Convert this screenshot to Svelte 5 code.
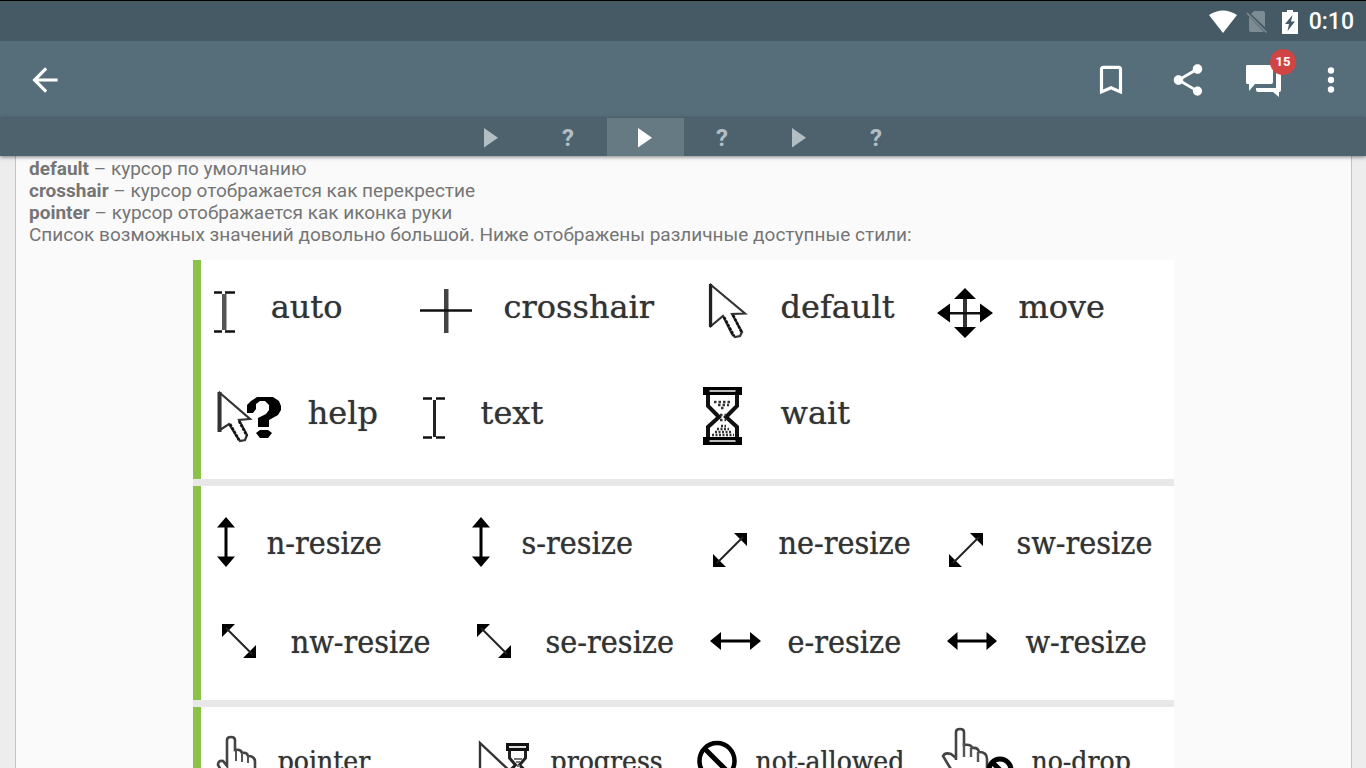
<script>
  const tabs = ['video', 'quiz', 'video', 'quiz', 'video', 'quiz'];
  let active = $state(2);

  const terms = [
    ['default', 'курсор по умолчанию'],
    ['crosshair', 'курсор отображается как перекрестие'],
    ['pointer', 'курсор отображается как иконка руки']
  ];

  const sections = [
    {
      kind: 'basic',
      items: [
        ['auto', 38], ['crosshair', 63], ['default', 56], ['move', 60],
        ['help', 75], ['text', 40], ['wait', 56]
      ]
    },
    {
      kind: 'resize',
      items: [
        ['n-resize', 34], ['s-resize', 34], ['ne-resize', 52], ['sw-resize', 52],
        ['nw-resize', 58], ['se-resize', 58], ['e-resize', 61], ['w-resize', 61]
      ]
    },
    {
      kind: 'state',
      items: [['pointer', 53], ['progress', 64], ['not-allowed', 49], ['no-drop', 79]]
    }
  ];
</script>

{#snippet cursor(name, width)}
  <svg class="cursor" {width} height="64" viewBox="0 -32 {width} 64" aria-hidden="true">
    {#if name === 'auto'}
      <path d="M13-17h4.500v36H13z" fill="#555" />
      <path d="M5-18.500h8M16-18.500h10M5 20.500h8M16 20.500h10" stroke="#111" stroke-width="2.600" />
    {:else if name === 'text'}
      <path d="M16-17h3v37h-3z" fill="#222" />
      <path d="M6-18.500h9M19-18.500h9M6 20.500h9M19 20.500h9" stroke="#111" stroke-width="2.600" />
    {:else if name === 'crosshair'}
      <path d="M27-22h4.500v44H27z" fill="#444" />
      <path d="M3-.500h52" stroke="#111" stroke-width="2.400" />
    {:else if name === 'default'}
      <path d="M11-26 45 2.500 32 3 42 21 40 25 35 26 32 23 23 5 11 15Z" fill="#fff" stroke="#333" stroke-width="2.200" />
      <path d="M10.500-27v43" stroke="#222" stroke-width="3.200" />
      <path d="M24 6l10 19M33 4l9 18" stroke="#111" stroke-width="2.600" stroke-dasharray="3 1" />
    {:else if name === 'help'}
      <path d="M11-24 41 2 30 3 38 18 36 23 31 24 28 20 20 7 11 13Z" fill="#fff" stroke="#333" stroke-width="2.200" />
      <path d="M10.500-25v40" stroke="#333" stroke-width="4" />
      <path d="M21 7l9 16M30 4l8 15" stroke="#111" stroke-width="2.600" stroke-dasharray="3 1" />
      <path d="M38-4v-8l4-4 6-4h16l6 4 2 5v4l-3 5-9 5v7H49V1l8-4 3-4v-5l-4-4h-5l-4 3v5l-3 4h-6z" />
      <path d="M47 16l4-3h8l4 3-4 5h-8z" />
    {:else if name === 'wait'}
      <path d="M4.500-28.500h36v5h-36zM4.500 21.500h36v5h-36z" fill="#bbb" stroke="#000" stroke-width="3" />
      <path d="M7-29v6M38-29v6M7 21v6M38 21v6" stroke="#000" stroke-width="5" />
      <path d="M8-22v11L19 0 8 10v10M37-22v11L26 0l11 10v10" fill="none" stroke="#111" stroke-width="4" />
      <path d="M14-15h17M18-12h11M21-9h4M20-2h6M20 3h6" stroke="#333" stroke-width="2.500" stroke-dasharray="2.500 2" />
      <path d="M21 9h5M17 12h12M15 15h16M12 18h22" stroke="#333" stroke-width="2.500" stroke-dasharray="2 1.500" />
    {:else if name === 'move'}
      <path d="M29-14h4v32h-4z" fill="#333" />
      <path d="M13 1h36v2.500H13z" fill="#111" />
      <path d="M31-23l11 11H20zM31 27l11-11H20zM3 2l13-9.500v19zM59 2 46-7.500v19z" />
    {:else if name === 'n-resize' || name === 's-resize'}
      <path d="M17-26l9 10.500H18.500v29H26L17 24 8 13.500h7.500v-29H8z" />
    {:else if name === 'ne-resize'}
      <path d="M32-10h13V3zM11 11v13h13z" /><path d="M15 20 41-6" stroke="#222" stroke-width="2" />
    {:else if name === 'sw-resize'}
      <path d="M30-10h13V3zM9 11v13h13z" /><path d="M13 20 39-6" stroke="#222" stroke-width="2" />
    {:else if name === 'nw-resize' || name === 'se-resize'}
      <path d="M13-18h13L13-5zM47 3v13H34z" /><path d="M17-14 43 12" stroke="#222" stroke-width="2" />
    {:else if name === 'e-resize'}
      <path d="M8-1l11-9v7.500h29V-10l11 9-11 9V.500H19V8z" />
    {:else if name === 'w-resize'}
      <path d="M7-1l10.500-9v7.500h29V-10L57-1 46.500 8V.500h-29V8z" />
    {:else if name === 'pointer'}
      <path d="M18 6v-26q0-3 4-3t4 3v10q6-1 7 3 5-1 6 3 7 0 7 6v14l-4 8H22L12 10 9 5q0-5 5-4z" fill="#fff" stroke="#444" stroke-width="2.600" />
      <path d="M27-10V1M33-7v9M39-4v7" fill="none" stroke="#555" stroke-width="2" />
    {:else if name === 'progress'}
      <path d="M9-17v44l12-11 8 14 6-3-7-13h14z" fill="#fff" stroke="#333" stroke-width="2.400" />
      <path d="M36.500-15.500h20v5h-20zM36.500 19h20v5h-20z" fill="#ddd" stroke="#111" stroke-width="3" />
      <path d="M38.500-9v7l6 7-6 6v7M54.500-9v7l-6 7 6 6v7" fill="none" stroke="#222" stroke-width="3" />
      <path d="M43-1h8M45 2h4M46 6h3" stroke="#777" stroke-width="2" />
    {:else if name === 'not-allowed'}
      <ellipse cx="26" cy="1" rx="17.500" ry="18" fill="#fff" stroke="#000" stroke-width="4.500" />
      <path d="M14-11 38 13" stroke="#000" stroke-width="5" />
    {:else if name === 'no-drop'}
      <path d="M20 0v-28q0-3 4-3t4 3v13q7-1 8 3 6-1 7 4 8 0 8 7v16l-5 8H24L13 6 7-4q2-4 8-2l5 4z" fill="#fff" stroke="#444" stroke-width="2.600" />
      <path d="M28-17v14M35-12v9M42-8v10" fill="none" stroke="#555" stroke-width="2.400" />
      <circle cx="64" cy="10" r="11" fill="#fff" stroke="#000" stroke-width="5" />
      <path d="M56 2l16 16" stroke="#000" stroke-width="5" />
    {/if}
  </svg>
{/snippet}

<div class="screen">
  <div class="status">
    <svg width="28" height="24" viewBox="0 0 28 24" aria-hidden="true">
      <path d="M0 5Q14-4 28 5L14 23z" fill="#fff" />
    </svg>
    <svg class="sim" width="22" height="24" viewBox="0 0 22 24" aria-hidden="true">
      <path d="M8 1h9q2 0 2 2v14L5 4zM3 6.500 18 22H5q-2 0-2-2z" fill="#7d8b92" />
      <path d="M1 3 20.500 22.500" stroke="#7d8b92" stroke-width="1.600" />
    </svg>
    <svg class="battery" width="16" height="24" viewBox="0 0 16 24" aria-hidden="true">
      <path d="M5 0h6v2h5v22H0V2h5z" fill="#fff" />
      <path d="M10.500 5 3 14h4l-1.500 7L13 11.500H9z" fill="#465a65" />
    </svg>
    <span class="time">0:10</span>
  </div>

  <header class="toolbar">
    <button class="back" aria-label="Назад">
      <svg width="38" height="38" viewBox="0 0 24 24"><path d="M20 11H7.830l5.590-5.590L12 4l-8 8 8 8 1.410-1.410L7.830 13H20z" fill="#fff" /></svg>
    </button>
    <div class="actions">
      <button aria-label="Закладка">
        <svg width="38" height="38" viewBox="0 0 24 24"><path d="M17 3H7c-1.100 0-2 .900-2 2v16l7-3 7 3V5c0-1.100-.900-2-2-2zm0 15-5-2.180L7 18V5h10z" fill="#fff" /></svg>
      </button>
      <button aria-label="Поделиться">
        <svg width="38" height="38" viewBox="0 0 24 24"><path d="M18 16.080c-.760 0-1.440.300-1.960.770L8.910 12.700c.050-.230.090-.460.090-.700s-.040-.470-.090-.700l7.050-4.110c.540.500 1.250.810 2.040.810 1.660 0 3-1.340 3-3s-1.340-3-3-3-3 1.340-3 3c0 .240.040.470.090.700L8.040 9.810C7.500 9.310 6.790 9 6 9c-1.660 0-3 1.340-3 3s1.340 3 3 3c.790 0 1.500-.310 2.040-.810l7.120 4.160c-.050.210-.080.430-.080.650 0 1.610 1.310 2.920 2.920 2.920s2.920-1.310 2.920-2.920-1.310-2.920-2.920-2.920z" fill="#fff" /></svg>
      </button>
      <button class="comments" aria-label="Комментарии">
        <svg width="38" height="38" viewBox="0 0 38 38">
          <path d="M1 4h24q2 0 2 2v15q0 2-2 2H9l-6 7V23H1q-1 0-1-2V6q0-2 1-2z" fill="#fff" />
          <path d="M30 12h3q2 0 2 2v15q0 2-2 2v5l-6-5H12q-2 0-2-2v-2h20z" fill="#fff" />
        </svg>
        <span class="badge">15</span>
      </button>
      <button class="more" aria-label="Ещё">
        <svg width="38" height="38" viewBox="0 0 24 24" fill="#fff"><circle cx="12" cy="6" r="2" /><circle cx="12" cy="12" r="2" /><circle cx="12" cy="18" r="2" /></svg>
      </button>
    </div>
  </header>

  <nav class="tabs">
    {#each tabs as kind, i}
      <button class="tab" class:active={i === active} aria-label={kind === 'video' ? 'Урок' : null} onclick={() => (active = i)}>
        {#if kind === 'video'}
          <svg width="14" height="20" viewBox="0 0 14 20" aria-hidden="true"><path d="M0 0v19.500L14 9.700z" fill="currentColor" /></svg>
        {:else}?{/if}
      </button>
    {/each}
  </nav>

  <main>
    <article>
      {#each terms as [term, text]}
        <p><b>{term}</b> – {text}</p>
      {/each}
      <p>Список возможных значений довольно большой. Ниже отображены различные доступные стили:</p>

      <div class="chart">
        {#each sections as section}
          <ul class={section.kind}>
            {#each section.items as [name, width]}
              <li>{@render cursor(name, width)}<span>{name}</span></li>
            {/each}
          </ul>
        {/each}
      </div>
    </article>
  </main>
</div>

<style>
  :global(body) {
    margin: 0;
    background: #ededed;
  }
  .screen {
    display: flex;
    flex-direction: column;
    height: 100vh;
    overflow: hidden;
    font-family: Roboto, sans-serif;
  }
  button {
    border: 0;
    padding: 0;
    background: none;
    font: inherit;
    color: inherit;
    display: flex;
    align-items: center;
    justify-content: center;
  }
  .status {
    flex: none;
    box-sizing: border-box;
    height: 41px;
    border-top: 1px solid #000;
    background: #465a65;
    color: #fff;
    display: flex;
    align-items: center;
    justify-content: flex-end;
    padding: 1px 12px 0 0;
  }
  .sim {
    margin-left: 9px;
  }
  .battery {
    margin-left: 14px;
  }
  .time {
    margin-left: 11px;
    font-size: 23px;
    font-weight: 500;
    line-height: 38px;
  }
  .toolbar {
    flex: none;
    height: 77px;
    display: flex;
    justify-content: space-between;
    background: #566e7a;
  }
  .back {
    width: 90px;
  }
  .actions {
    display: flex;
    padding-right: 7px;
  }
  .actions button {
    width: 77px;
  }
  .actions .more {
    width: 56px;
  }
  .comments {
    position: relative;
  }
  .badge {
    position: absolute;
    top: 8px;
    right: 7px;
    width: 26px;
    height: 26px;
    border-radius: 50%;
    background: #d04444;
    color: #fff;
    font-size: 13px;
    font-weight: 700;
    line-height: 26px;
    text-align: center;
  }
  .tabs {
    flex: none;
    position: relative;
    z-index: 1;
    height: 38px;
    display: flex;
    justify-content: center;
    padding-left: 1px;
    background: #4d626d;
    box-shadow: 0 1px 4px rgba(0, 0, 0, 0.5);
  }
  .tab {
    width: 77px;
    padding-top: 2px;
    color: #b3bec4;
    font-size: 24px;
    font-weight: 700;
  }
  .tab.active {
    background: #657a83;
    color: #fff;
  }
  main {
    flex: 1;
    min-height: 0;
    overflow-y: auto;
    scrollbar-width: none;
    padding: 0 14px 0 15px;
  }
  article {
    padding: 2px 13px 24px;
    background: #fafafa;
    border: 1px solid #c4c4c4;
    border-width: 0 1px;
  }
  p {
    margin: 0;
    font-size: 19px;
    line-height: 22px;
    color: #757575;
  }
  .chart {
    width: 75%;
    margin: 14px auto 0;
    background: #fff;
    overflow: hidden;
  }
  ul {
    display: grid;
    margin: 0;
    padding: 0 0 0 8px;
    list-style: none;
    border-left: 8px solid #8bc34a;
    font-family: "DejaVu Serif", serif;
    font-size: 32px;
    line-height: 40px;
    color: #333;
    text-shadow: 0 0 1px #777;
  }
  ul + ul {
    position: relative;
    margin-top: 7px;
  }
  ul + ul::before {
    content: "";
    position: absolute;
    left: -8px;
    right: 0;
    top: -7px;
    height: 7px;
    background: #e8e8e8;
  }
  li {
    display: flex;
    align-items: center;
    gap: 24px;
    white-space: nowrap;
    min-width: 0;
  }
  .cursor {
    flex: none;
    overflow: visible;
  }
  .basic {
    grid-template-columns: 208fr 284fr 234fr 240fr;
    grid-template-rows: 102px 110px;
    padding-bottom: 7px;
  }
  .basic span {
    padding-bottom: 8px;
  }
  .resize {
    grid-template-columns: 255fr 239fr 238fr 234fr;
    grid-template-rows: 114px 84px;
    padding-bottom: 16px;
    font-family: "DejaVu Serif Condensed", "DejaVu Serif", serif;
  }
  .state {
    grid-template-columns: 262fr 220fr 246fr 238fr;
    grid-template-rows: 106px;
    font-family: "DejaVu Serif Condensed", "DejaVu Serif", serif;
    font-size: 28px;
  }
  .state li {
    gap: 16px;
  }
  .state span {
    padding-top: 4px;
  }
</style>
